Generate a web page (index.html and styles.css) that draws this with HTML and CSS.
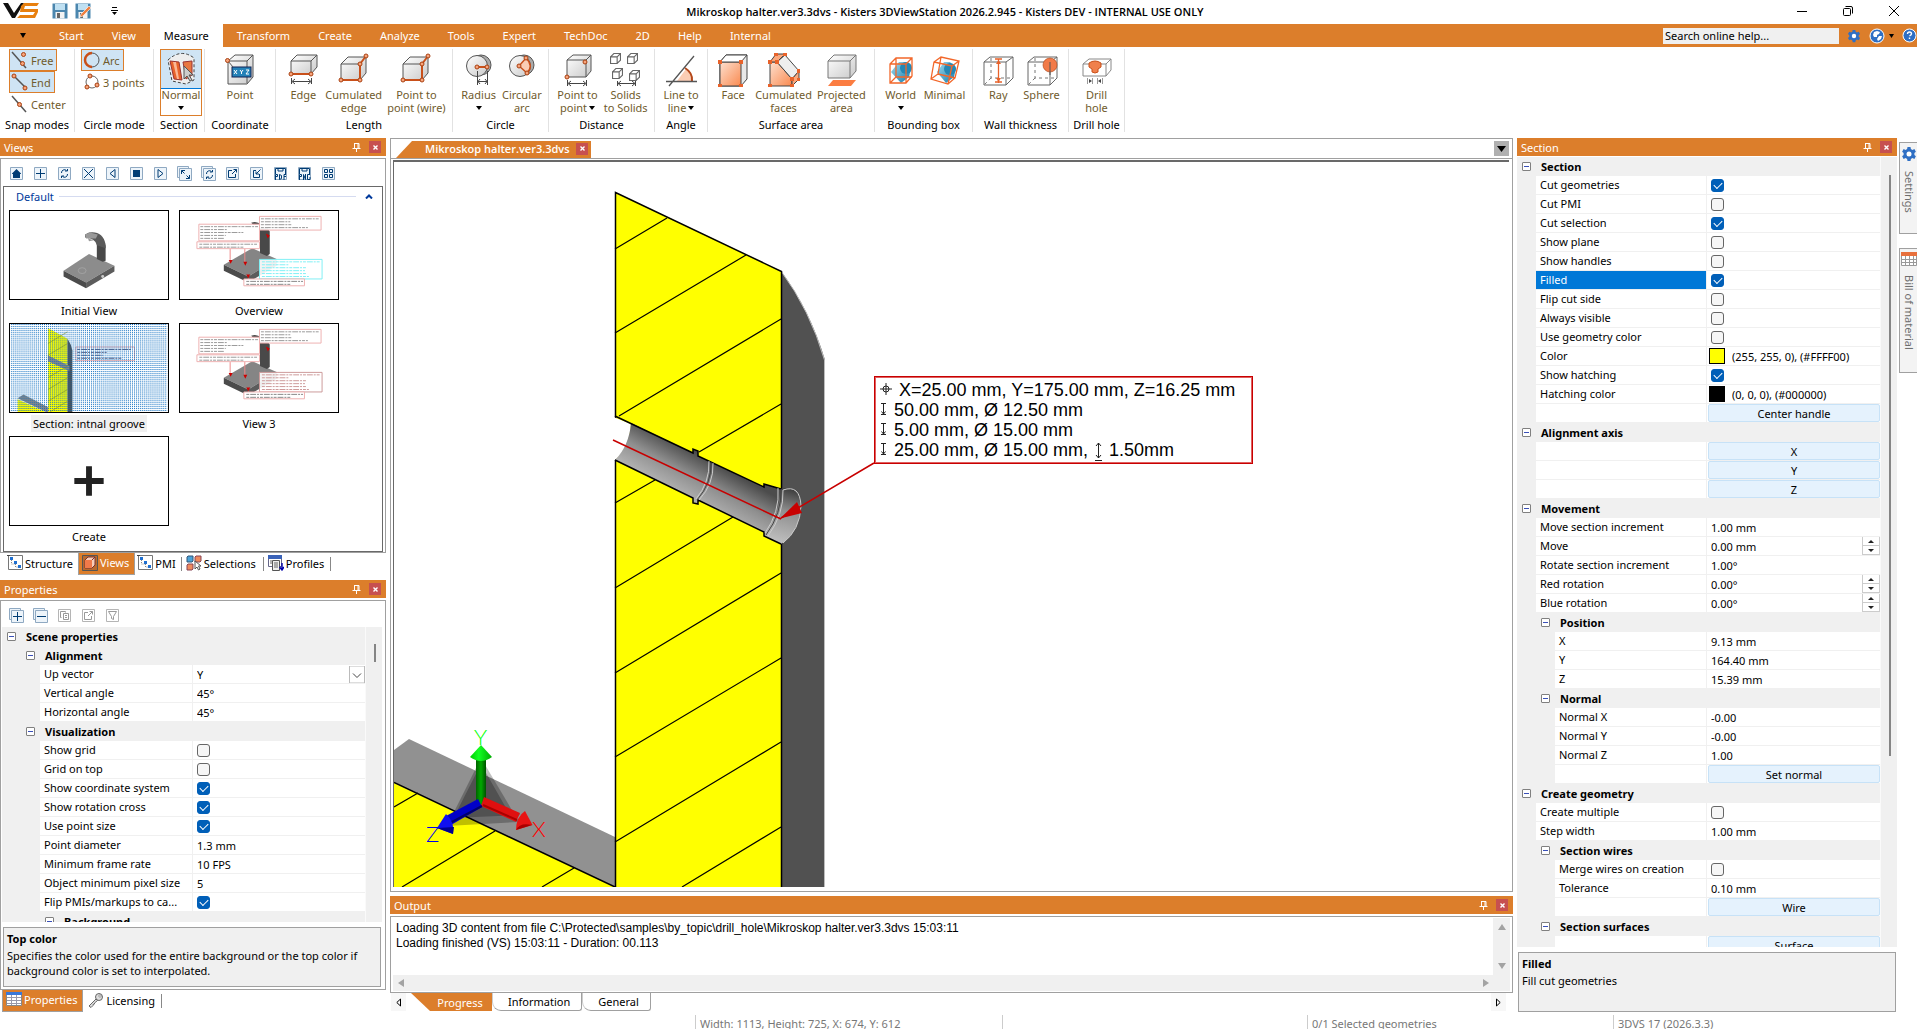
FILE: index.html
```html
<!DOCTYPE html>
<html lang="en">
<head>
<meta charset="utf-8">
<title>Mikroskop halter.ver3.3dvs - Kisters 3DViewStation</title>
<link rel="stylesheet" href="styles.css">
</head>
<body>

<!-- Shared drawings -->
<svg class="defs" width="0" height="0" aria-hidden="true">
  <defs>
    <linearGradient id="face" x1="0" y1="0" x2="1" y2="1"><stop offset="0" stop-color="#fff"/><stop offset="1" stop-color="#c9c9c9"/></linearGradient>
    <linearGradient id="orangeFace" x1="0" y1="0" x2="1" y2="1"><stop offset="0" stop-color="#fde0cf"/><stop offset="1" stop-color="#fa8a50"/></linearGradient>
    <linearGradient id="blueFace" x1="0" y1="0" x2="1" y2="1"><stop offset="0" stop-color="#9fdcf0"/><stop offset="1" stop-color="#1479a8"/></linearGradient>
    <pattern id="dots" width="2" height="2" patternUnits="userSpaceOnUse"><rect width="1" height="1" fill="#0a6cc0"/></pattern>
    <symbol id="pin" viewBox="0 0 9 9"><path d="M2 .5h5M2.500 .5v5M6 .5v5M7 .5v5M.5 5.500h8M4.500 6v3" fill="none" stroke="#fff"/></symbol>
    <symbol id="cross" viewBox="0 0 5 5"><path d="M.5.5l4 4M4.500.5l-4 4" stroke="#fff" stroke-width="1.400"/></symbol>
    <symbol id="gear" viewBox="0 0 16 16"><path fill="#2f6fc4" d="M6.500 1h3l.4 2 1.500.9 2-.8 1.500 2.600-1.500 1.400v1.800l1.500 1.400-1.500 2.600-2-.8-1.500.9-.4 2h-3l-.4-2-1.500-.9-2 .8-1.500-2.600 1.500-1.400V7.100L1.100 5.700l1.500-2.600 2 .8 1.500-.9z"/><circle cx="8" cy="8" r="2.500" fill="#fff"/></symbol>
    <symbol id="save" viewBox="0 0 16 16"><path fill="#4b86ae" d="M.5.5h15v15H.5z"/><path fill="#bfe0f2" d="M3 1h10v6H3z"/><path fill="#f3f3f3" d="M3.500 9h9v6.500h-9z"/><path fill="#666" d="M5 10h3v5H5z"/></symbol>
    <symbol id="tree" viewBox="0 0 16 16"><path fill="#fff" stroke="#777" d="M1.500.5h14v14h-14z"/><path fill="none" stroke="#888" stroke-dasharray="1 1" d="M4.500 3v6h4v3h4"/><path fill="#1e6fd0" d="M3 2h3v3H3zM7 6h3v3H7zM11 10h3v3h-3z"/><path d="M0 .5h3" stroke="#444"/></symbol>
    <symbol id="minicube" viewBox="0 0 10 10"><path fill="#fff" stroke="#666" d="M.5 3.500h6v6h-6zM.5 3.500l3-3h6v6l-3 3M6.500 3.500l3-3"/></symbol>
    <symbol id="stand" viewBox="0 0 160 90">
      <path fill="#8c8c8c" d="M54 61L80 44l26 12-29 17z"/><path fill="#4b4b4b" d="M54 61l23 12v6L54 67z"/><path fill="#5c5c5c" d="M77 73l29-17v6L77 79z"/>
      <ellipse cx="73" cy="61" rx="4" ry="3" fill="none" stroke="#aaa" stroke-width=".7"/><circle cx="94" cy="67" r="1.500" fill="#ccc"/>
      <path fill="#484848" d="M88 34l9 1v16l-3 1-6-3z"/><path fill="#5a5a5a" d="M76 24l4-2q14-2 17 12v4l-9-3q-1-7-12-8z"/><path fill="#999" d="M76 24l5-2 8 2-2 4-10 0zM79 28l6 2-5 1z"/>
    </symbol>
    <symbol id="measured" viewBox="0 0 160 90">
      <path fill="#858585" d="M44 55l29-17 25 11-29 18z"/><path fill="#4b4b4b" d="M44 55l25 12v6L44 61z"/><path fill="#5c5c5c" d="M69 67l29-18v7L69 73z"/>
      <path fill="#494949" d="M81 18l8 0 2 3v23l-3 2-7-3zM72 12q6-2 10 2h-8z"/>
      <g fill="#fff" fill-opacity=".9" stroke="#eeb0b0"><path d="M80.500 5.500h63v14h-63z"/><path d="M18.500 13.500h62v17h-62z"/><path d="M16.500 31.500h64v7h-64z"/></g>
      <g stroke="#999" stroke-dasharray="3 1 6 1 2 1"><path d="M82 8h60M82 11h30M82 14h32M82 17h48M20 16h59M20 19h28M20 22h44M20 25h26M20 28h25M19 34h60M19 37h46"/></g>
      <path d="M50.500 39v11M65.500 39v14" stroke="#e88"/><path fill="#c00" d="M49 50h4l-2 4zM64 52h4l-2 4zM87 23l4 2-2 3zM67 65h4l-2 4z"/>
    </symbol>
    <symbol id="measuredLow" viewBox="0 0 160 90">
      <path d="M80.500 49.500h64v20h-64z" fill="#fff" fill-opacity=".9" stroke="currentColor"/><path d="M83 52h60M83 55h28M83 58h46M83 61h44M83 64h46M83 67h48" stroke="currentColor" stroke-dasharray="3 1 6 1 2 1"/>
      <path d="M64.500 69.500h62v7h-62z" fill="#fff" stroke="#eeb0b0"/><path d="M67 72h58M67 75h46" stroke="#888" stroke-dasharray="3 1 6 1 2 1"/>
    </symbol>
    <symbol id="depth" viewBox="0 0 7 14"><path d="M1 1.500h5M3.500 2v10M1.500 9.500l2 2.500 2-2.500M1 12.500h5" fill="none" stroke="#222"/></symbol>
  </defs>
</svg>

<header class="titlebar">
  <div class="quick">
    <svg width="40" height="18" viewBox="0 0 40 18"><path fill="#111" d="M0 1h5l6 10L18 1h3L12 16H9z"/><path fill="#e8800f" d="M21 1h15l-2 3H22l-1 3h14v3l-3 6H14l3-3h13l2-3H17l1-6z"/></svg>
    <button aria-label="Save"><svg width="16" height="16"><use href="#save"/></svg></button>
    <button aria-label="Save as"><svg width="17" height="16"><use href="#save" width="16"/><path d="M5 14l1-3 8-8 2 2-8 8z" fill="#f08040" stroke="#fff" stroke-width=".6"/></svg></button>
    <button aria-label="Customize"><svg width="7" height="8"><path d="M1 .5h5M0 3.500h7"  stroke="#000"/><path d="M1 5h5l-2.500 3z"/></svg></button>
  </div>
  <h1>Mikroskop halter.ver3.3dvs - Kisters 3DViewStation 2026.2.945 - Kisters DEV - INTERNAL USE ONLY</h1>
  <div class="winctl">
    <button aria-label="Minimize"><svg width="10" height="10"><path d="M0 5.500h10" stroke="#000"/></svg></button>
    <button aria-label="Restore"><svg width="10" height="10" fill="none" stroke="#000"><rect x=".5" y="2.500" width="7" height="7" rx="1"/><path d="M2.500.5H8q1.500 0 1.500 1.500v5.500"/></svg></button>
    <button aria-label="Close"><svg width="10" height="10"><path d="M0 0l10 10M10 0L0 10" stroke="#000"/></svg></button>
  </div>
</header>

<nav class="menu">
  <button class="file" aria-label="File"><svg width="6" height="5"><path d="M0 0h6L3 5z"/></svg></button>
  <a href="#">Start</a><a href="#">View</a><a href="#" class="on">Measure</a><a href="#">Transform</a><a href="#">Create</a><a href="#">Analyze</a><a href="#">Tools</a><a href="#">Expert</a><a href="#">TechDoc</a><a href="#">2D</a><a href="#">Help</a><a href="#">Internal</a>
  <div class="help">
    <input type="text" value="Search online help..." aria-label="Search online help">
    <button aria-label="Settings"><svg width="14" height="14"><use href="#gear"/></svg></button>
    <button aria-label="Online"><svg width="16" height="16" viewBox="0 0 16 16"><circle cx="8" cy="8" r="7" fill="#2f6fc4" stroke="#fff"/><path fill="#fff" d="M8 3l3 1-1 2-2 1 0 2-3 0-1-2 1-3zM10 8l3 0-1 3-3 2-1-2z"/></svg><svg width="5" height="4"><path d="M0 0h5L2.500 4z"/></svg></button>
    <button aria-label="Help"><svg width="15" height="15"><circle cx="7.500" cy="7.500" r="6.500" fill="#2f6fc4" stroke="#fff"/><path d="M5.500 6q0-2 2-2t2 1.800q0 1-2 2.200M7.500 9.500v1.500" fill="none" stroke="#fff" stroke-width="1.400"/></svg></button>
  </div>
</nav>

<section class="ribbon">
  <div class="group g-snap">
    <div class="stack">
      <button class="small on"><svg width="18" height="18"><path d="M1 1l14 16" stroke="#555" stroke-width="1.500"/><g fill="#f7a47c" stroke="#a84010"><circle cx="12.500" cy="3.500" r="2"/><circle cx="11.500" cy="12.500" r="2"/></g></svg>Free</button>
      <button class="small on"><svg width="18" height="18"><path d="M3 3l12 12" stroke="#555" stroke-width="1.500"/><g fill="#f7a47c" stroke="#a84010"><circle cx="3" cy="3" r="2"/><circle cx="14" cy="15" r="2"/></g></svg>End</button>
      <button class="small"><svg width="18" height="18"><path d="M1 1l14 16" stroke="#555" stroke-width="1.500"/><circle cx="8.500" cy="9.500" r="2" fill="#f7a47c" stroke="#a84010"/></svg>Center</button>
    </div><h2>Snap modes</h2>
  </div>
  <div class="group g-circlemode">
    <div class="stack">
      <button class="small on"><svg width="18" height="18"><circle cx="9" cy="9" r="7" fill="none" stroke="#555"/><path d="M9 2a7 7 0 0 0 0 14" fill="none" stroke="#c9501a" stroke-width="2.500"/></svg>Arc</button>
      <button class="small"><svg width="18" height="18"><circle cx="9" cy="9" r="6" fill="none" stroke="#666"/><g fill="#f7a47c" stroke="#a84010"><circle cx="7" cy="3" r="2"/><circle cx="14" cy="12" r="2"/><circle cx="4" cy="14" r="2"/></g></svg>3 points</button>
    </div><h2>Circle mode</h2>
  </div>
  <div class="group g-section">
    <div class="tools">
      <button class="tool normal"><svg width="34" height="34"><path d="M4 8q13-12 26-2v22l-8 4-14-3z" fill="#eee" stroke="#444" stroke-dasharray="3 2"/><path d="M6 9l9 1 3 18-8-1z" fill="#e8622a" stroke="#933"/><path d="M9 10l3 0 3 17-2 0z" fill="#fbb896"/><path d="M19 10l9-1v14l-6 4z" fill="#e8763f" stroke="#933"/><path d="M20 14v13l3-3 3 5 2-1-3-5h4z" fill="#ccc" stroke="#555"/></svg><span>Normal</span><i class="drop"></i></button>
    </div><h2>Section</h2>
  </div>
  <div class="group g-coord">
    <div class="tools">
      <button class="tool"><svg width="34" height="34"><path d="M5 9l7-6h18v22l-6 7H5z" fill="url(#face)" stroke="#555"/><path d="M5 9h19v22M24 9l6-6" fill="none" stroke="#555"/><rect x="9" y="15" width="19" height="10" fill="#2482b8" stroke="#125"/><path d="M11 18l3 4M14 18l-3 4M17 18l1.500 2 1.500-2M18.500 20v2M23 18h3l-3 4h3" fill="none" stroke="#fff"/><path d="M5 9l5 6" stroke="#555"/><circle cx="4.500" cy="8.500" r="2" fill="#f7a47c" stroke="#a84010"/></svg><span>Point</span></button>
    </div><h2>Coordinate</h2>
  </div>
  <div class="group g-length">
    <div class="tools">
      <button class="tool"><svg width="34" height="34"><path d="M5 9l6-6h20l0 12-6 7H5z" fill="url(#face)" stroke="#555"/><path d="M5 9h20v13M25 9l6-6" fill="none" stroke="#555"/><path d="M5 22h20" stroke="#c9501a" stroke-width="2"/><g fill="#f7a47c" stroke="#a84010"><circle cx="5" cy="22" r="2"/><circle cx="25" cy="22" r="2"/></g><path d="M5.500 26v6M25.500 26v6M7 29.500h17M9 27l-3 2.500L9 32M22 27l3 2.500-3 2.500" fill="none" stroke="#444"/></svg><span>Edge</span></button>
      <button class="tool"><svg width="34" height="34"><path d="M4 12l7-7h18v16l-6 7H4z" fill="url(#face)" stroke="#555"/><path d="M4 12h19v16" fill="none" stroke="#555"/><path d="M4 28h19V12l6-8" fill="none" stroke="#c9501a" stroke-width="2"/><g fill="#f7a47c" stroke="#a84010"><circle cx="4" cy="28" r="2"/><circle cx="23" cy="28" r="2"/><circle cx="23" cy="12" r="2"/><circle cx="29" cy="4" r="2"/></g></svg><span>Cumulated<br>edge</span></button>
      <button class="tool"><svg width="34" height="34"><path d="M4 12l7-7h18v16l-6 7H4z" fill="url(#face)" stroke="#555"/><path d="M4 12h19v16" fill="none" stroke="#555"/><path d="M4 28h19V12l6-8" fill="none" stroke="#c9501a" stroke-width="2"/><g fill="#f7a47c" stroke="#a84010"><circle cx="4" cy="28" r="2"/><circle cx="23" cy="28" r="2"/><circle cx="23" cy="12" r="2"/><circle cx="29" cy="4" r="2"/></g></svg><span>Point to<br>point (wire)</span></button>
    </div><h2>Length</h2>
  </div>
  <div class="group g-circle">
    <div class="tools">
      <button class="tool"><svg width="34" height="34"><circle cx="19" cy="13" r="10" fill="#aaa" stroke="#555"/><circle cx="15" cy="14" r="10.500" fill="url(#face)" stroke="#555"/><path d="M15 15h10" stroke="#c9501a" stroke-width="2"/><g fill="#f7a47c" stroke="#a84010"><circle cx="15" cy="15" r="2"/><circle cx="25" cy="15" r="2"/></g><path d="M15.500 19v14M25.500 19v14M16 29.500h9M18 27l-2 2.500 2 2.500M23 27l2 2.500-2 2.500" fill="none" stroke="#444"/></svg><span>Radius</span><i class="drop"></i></button>
      <button class="tool"><svg width="34" height="34"><circle cx="19" cy="13" r="10" fill="#aaa" stroke="#555"/><circle cx="15" cy="14" r="10.500" fill="url(#face)" stroke="#555"/><path d="M14 14l7-8q8 8 1 15z" fill="#fbcdb4" stroke="#c9501a" stroke-width="1.500"/><g fill="#f7a47c" stroke="#a84010"><circle cx="14" cy="14" r="2"/><circle cx="21" cy="6" r="2"/><circle cx="22" cy="21" r="2"/></g></svg><span>Circular<br>arc</span></button>
    </div><h2>Circle</h2>
  </div>
  <div class="group g-distance">
    <div class="tools">
      <button class="tool"><svg width="34" height="34"><path d="M6 8l6-5h18v16l-5 6H6z" fill="url(#face)" stroke="#555"/><path d="M6 8h19v17M25 8l5-5" fill="none" stroke="#555"/><g fill="#f7a47c" stroke="#a84010"><circle cx="24" cy="10" r="2"/><circle cx="6" cy="25" r="2"/></g><path d="M6.500 28v6M25.500 28v6M8 31.500h16M10 29l-3 2.500 3 2.500M22 29l3 2.500-3 2.500" fill="none" stroke="#444"/></svg><span>Point to<br>point<i class="drop in"></i></span></button>
      <button class="tool"><svg width="34" height="34"><use href="#minicube" x="1" y="1" width="11" height="11"/><use href="#minicube" x="18" y="1" width="11" height="11"/><use href="#minicube" x="3" y="16" width="11" height="11"/><use href="#minicube" x="20" y="18" width="11" height="11"/><path d="M8.500 29v5M26.500 29v5M9 31.500h17M12 29l-3 2.500 3 2.500M23 29l3 2.500-3 2.500" fill="none" stroke="#444"/></svg><span>Solids<br>to Solids</span></button>
    </div><h2>Distance</h2>
  </div>
  <div class="group g-angle">
    <div class="tools">
      <button class="tool"><svg width="34" height="34"><path d="M13 29l9-12q7 5 6 12z" fill="#fbcdb4"/><path d="M21 16q8 5 7 13" fill="none" stroke="#b5481a" stroke-width="2"/><path d="M2 29.500h31M5 34L30 4" stroke="#555" stroke-width="1.300"/></svg><span>Line to<br>line<i class="drop in"></i></span></button>
    </div><h2>Angle</h2>
  </div>
  <div class="group g-surface">
    <div class="tools">
      <button class="tool"><svg width="34" height="36"><path d="M4 10l6-7h21v24l-6 7H4z" fill="#e8e8e8" stroke="#444"/><path d="M4 10h21v24H4z" fill="url(#orangeFace)" stroke="#444"/><path d="M4 10l6-7h21l-6 7z" fill="#fff" stroke="#444"/><g fill="#e8622a"><path d="M2 8h4v4H2zM23 8h4v4h-4zM2 32h4v3H2zM23 32h4v3h-4z"/></g></svg><span>Face</span></button>
      <button class="tool"><svg width="34" height="36"><path d="M3 10h7l15 17v7H3z" fill="url(#orangeFace)" stroke="#444"/><path d="M10 10l8-7 14 16-7 8z" fill="#eee" stroke="#444"/><path d="M3 10l6-8 9 0-8 8zM25 27l7-8v8l-7 7z" fill="#fba77c" stroke="#444"/><g fill="#e8622a"><path d="M1 8h4v4H1zM8 8h4v4H8zM7 1h4v3H7zM16 1h4v3h-4zM30 17h3v4h-3zM30 26h3v3h-3zM23 25h4v4h-4zM1 32h4v3H1zM23 32h4v3h-4z"/></g></svg><span>Cumulated<br>faces</span></button>
      <button class="tool"><svg width="34" height="36"><path d="M4 9l6-6h22v16l-6 7H4z" fill="url(#face)" stroke="#777"/><path d="M4 9h22v17M26 9l6-6" fill="none" stroke="#777"/><path d="M9 28h23l-5 6H4z" fill="#fb7d42"/></svg><span>Projected<br>area</span></button>
    </div><h2>Surface area</h2>
  </div>
  <div class="group g-box">
    <div class="tools">
      <button class="tool"><svg width="34" height="34"><path d="M7 20l8-10 6 0 6 6-2 9-8 6z" fill="url(#blueFace)"/><circle cx="22" cy="16" r="6" fill="#2487b4"/><path d="M6 12l6-6h16v18l-6 7H6zM6 12h16v19M22 12l6-6M12 6v19l-6 6M12 25h16" fill="none" stroke="#f2672a" stroke-width="1.300"/></svg><span>World</span><i class="drop"></i></button>
      <button class="tool"><svg width="34" height="34"><path d="M9 20l7-10 6 0 6 6-2 9-8 6z" fill="url(#blueFace)"/><circle cx="22" cy="17" r="6" fill="#2487b4"/><path d="M6 10l7-5 18 4-4 17-7 6-17-5zM6 10l18 4 7-5M24 14l-4 18M13 5L10 22l-7 5M10 22l17 4" fill="none" stroke="#f2672a" stroke-width="1.300"/></svg><span>Minimal</span></button>
    </div><h2>Bounding box</h2>
  </div>
  <div class="group g-wall">
    <div class="tools">
      <button class="tool"><svg width="34" height="34"><path d="M3 10l6-5h23v21l-7 7H3zM3 10h22v23M25 10l7-5" fill="#fff" stroke="#666"/><path d="M10 6v20h20M10 26l-6 6" fill="none" stroke="#777" stroke-dasharray="3 3"/><path d="M17.500 7v24M14 7h7M14 30h7" stroke="#e8622a" stroke-width="1.300"/><path d="M15 12l2.500-4 2.500 4zM15 26l2.500 4 2.500-4z" fill="#e8622a"/></svg><span>Ray</span></button>
      <button class="tool"><svg width="34" height="34"><path d="M3 10l6-5h23v21l-7 7H3zM3 10h22v23M25 10l7-5" fill="#fff" stroke="#666"/><path d="M10 6v20h20M10 26l-6 6" fill="none" stroke="#777" stroke-dasharray="3 3"/><circle cx="25" cy="13" r="7" fill="#f27a48" stroke="#a84010" stroke-width=".6"/><path d="M25 10v13" stroke="#555"/></svg><span>Sphere</span></button>
    </div><h2>Wall thickness</h2>
  </div>
  <div class="group g-drill">
    <div class="tools">
      <button class="tool"><svg width="34" height="34"><path d="M3 12l6-5h22v11l-5 6H3zM3 12h23v12M26 12l5-5" fill="#fff" stroke="#888"/><path d="M9 11q6-4 12 0v4l-3 2v3q-3 2-6 0v-3l-3-2z" fill="#f0804c" stroke="#c9501a"/><path d="M7.500 26v6M12.500 26v6M17.500 26v6M22.500 26v6" stroke="#999"/><path d="M9 27l3 2-3 2zM21 27l-3 2 3 2z" fill="#444"/></svg><span>Drill<br>hole</span></button>
    </div><h2>Drill hole</h2>
  </div>
</section>

<main class="work">
  <aside class="left">
    <section class="dock">
      <header class="cap"><h2>Views</h2><button aria-label="Pin"><svg width="9" height="9"><use href="#pin"/></svg></button><button class="x" aria-label="Close"><svg width="5" height="5"><use href="#cross"/></svg></button></header>
      <div class="pane">
        <div class="bar blue">
          <button aria-label="Home"><svg width="15" height="15"><path class="f" d="M1.500 1.500h12v12h-12z"/><path class="d" d="M7.500 3L3 7.500V8h1v4h7V8h1v-.5z"/></svg></button>
          <button aria-label="Add"><svg width="15" height="15"><path class="f" d="M1.500 1.500h12v12h-12z"/><path class="s" d="M7.500 3v9M3 7.500h9"/></svg></button>
          <button aria-label="Update"><svg width="15" height="15"><path class="f" d="M1.500 1.500h12v12h-12z"/><path class="s" d="M4.500 7a3 3 0 0 1 5-2.500M10.500 8a3 3 0 0 1-5 2.500M8 5h2.500V3M7 10H4.500v2"/></svg></button>
          <button aria-label="Delete"><svg width="15" height="15"><path class="f" d="M1.500 1.500h12v12h-12z"/><path class="s" d="M3 3l9 9M12 3l-9 9"/></svg></button>
          <button aria-label="Previous"><svg width="15" height="15"><path class="f" d="M1.500 1.500h12v12h-12z"/><path class="s" d="M10 3.500v8l-5-4z"/></svg></button>
          <button aria-label="Stop"><svg width="15" height="15"><path class="f" d="M1.500 1.500h12v12h-12z"/><path class="d" d="M4 4h7v7H4z"/></svg></button>
          <button aria-label="Next"><svg width="15" height="15"><path class="f" d="M1.500 1.500h12v12h-12z"/><path class="s" d="M5 3.500v8l5-4z"/></svg></button>
          <button aria-label="Expand all"><svg width="15" height="15"><path class="f" d="M.5.5h11v11H.5z"/><path class="f" d="M2.500 2.500h12v12h-12z"/><path class="s" d="M4.500 8V4.500H8M4.500 4.500l3 3M12.500 9v3.500H9M12.500 12.500l-3-3"/></svg></button>
          <button aria-label="Update all"><svg width="15" height="15"><path class="f" d="M.5.5h11v11H.5z"/><path class="f" d="M2.500 2.500h12v12h-12z"/><path class="s" d="M5.500 8a3 3 0 0 1 5-2.500M11.500 9a3 3 0 0 1-5 2.500M9 6h2.500V4M8 11H5.500v2"/></svg></button>
          <button aria-label="Export"><svg width="15" height="15"><path class="f" d="M1.500 1.500h12v12h-12z"/><path class="s" d="M7 4.500H3.500v7h7V8M7 8l4.500-4.500M8.500 3.500h3v3"/></svg></button>
          <button aria-label="Import"><svg width="15" height="15"><path class="f" d="M1.500 1.500h12v12h-12z"/><path class="s" d="M7 4.500H4.500v7h6V8M11.500 3.500L7 8M7 5.500V8h3"/></svg></button>
          <button aria-label="Save PDF"><svg width="15" height="15"><path class="f" d="M1.500 1.500h12v12h-12z"/><path class="s" d="M2.500 8V2.500h10V8M5 2.500V5h5V2.500M2.500 14V8.500h2v2h-2M6.500 8.500v5l2-1v-3zM13 8.500h-2V14M11 10.500h2"/></svg></button>
          <button aria-label="Save PNG"><svg width="15" height="15"><path class="f" d="M1.500 1.500h12v12h-12z"/><path class="s" d="M2.500 8V2.500h10V8M5 2.500V5h5V2.500M2.500 14V8.500h2v2h-2M6.500 14V8.500l2 5V8M13 8.500h-2.500v5H13V11"/></svg></button>
          <button aria-label="Tiles"><svg width="15" height="15"><path class="f" d="M1.500 1.500h12v12h-12z"/><path class="s" d="M3.500 3.500h3v3h-3zM8.500 3.500h3v3h-3zM3.500 8.500h3v3h-3zM8.500 8.500h3v3h-3z"/></svg></button>
        </div>
        <div class="gallery">
          <div class="ghead"><span>Default</span><hr><svg width="8" height="5"><path d="M1 4.500L4 1.500l3 3" fill="none" stroke="#00399b" stroke-width="2"/></svg></div>
          <div class="thumbs">
            <figure><svg viewBox="0 0 160 90"><use href="#stand"/></svg><figcaption>Initial View</figcaption></figure>
            <figure><svg viewBox="0 0 160 90"><use href="#measured"/><g color="#7ff0f5"><use href="#measuredLow"/></g></svg><figcaption>Overview</figcaption></figure>
            <figure class="sel"><svg viewBox="0 0 160 90"><path fill="#fff" d="M0 0h160v90H0z"/><path fill="#ff0" d="M38 4l20 11v75H38zM7 77l31 14H7z"/><path fill="#505050" d="M58 15q4 6 5 12v63h-5z"/><path fill="#888" d="M38 32l22 11v5L38 38zM7 76l6-4 25 13v6z"/><path d="M38 20l20-12M38 32l20-12M38 55l20-12M38 67l20-12M38 79l20-12M40 90l18-11" stroke="#990" stroke-width=".6"/><path d="M66.500 23.500h60v14h-60z" fill="none" stroke="#eaa"/><path d="M68 26h56M68 29h30M68 32h26M68 35h46" stroke="#557" stroke-dasharray="3 1 6 1 2 1"/><path fill="url(#dots)" d="M0 0h160v90H0z"/></svg><figcaption>Section: intnal groove</figcaption></figure>
            <figure><svg viewBox="0 0 160 90"><use href="#measured"/><g color="#c99"><use href="#measuredLow"/></g></svg><figcaption>View 3</figcaption></figure>
            <figure><svg viewBox="0 0 160 90"><path d="M80 30v30M65 45h30" stroke="#222" stroke-width="6"/></svg><figcaption>Create</figcaption></figure>
          </div>
        </div>
      </div>
      <nav class="ptabs">
        <button><svg width="16" height="16"><use href="#tree"/></svg>Structure</button>
        <button class="on"><svg width="16" height="16"><path d="M.5.5h15v15H.5z" fill="#b8692e" stroke="#555"/><path d="M3 5l3-3h7v8l-3 3H3z" fill="#f8cdb8" stroke="#733"/><path d="M3 5h7v8H3z" fill="#f07a4a"/><path d="M10 5l3-3" stroke="#733"/></svg>Views</button>
        <button><svg width="16" height="16"><use href="#tree"/></svg>PMI</button>
        <button class="bl"><svg width="16" height="16"><path d="M1 2l1-1h5v5l-1 1H1z" fill="#4aa3d8" stroke="#357"/><path d="M9 2l1-1h5v5l-1 1H9zM1 10l1-1h5v5l-1 1H1z" fill="#f08a5c" stroke="#845"/><path d="M9 6v8l2-2 1.500 3 1.500-1-1.500-3H15z" fill="#fff" stroke="#555"/></svg>Selections</button>
        <button class="bl br"><svg width="16" height="16"><path d="M.5.5h13v11H.5z" fill="#fff" stroke="#668"/><path d="M0 0h14v4H0z" fill="#3a62b8"/><path d="M4.500 5.500h7v10h-7z" fill="#eee" stroke="#555"/><path d="M6 8h4M6 10h4M6 12h4M2 6h2M2 8h2" stroke="#666"/><path d="M14 8v6M11.500 12l2.500 3 2-3" fill="none" stroke="#00a" stroke-width="1.400"/></svg>Profiles</button>
      </nav>
    </section>

    <section class="dock grow">
      <header class="cap"><h2>Properties</h2><button aria-label="Pin"><svg width="9" height="9"><use href="#pin"/></svg></button><button class="x" aria-label="Close"><svg width="5" height="5"><use href="#cross"/></svg></button></header>
      <div class="pane props">
        <div class="bar">
          <button class="blue" aria-label="Expand all"><svg width="15" height="15"><path class="f" d="M.5.5h11v11H.5z"/><path class="f" d="M2.500 2.500h12v12h-12z"/><path class="s" d="M8.500 4v9M4 8.500h9"/></svg></button>
          <button class="blue" aria-label="Collapse all"><svg width="15" height="15"><path class="f" d="M.5.5h11v11H.5z"/><path class="f" d="M2.500 2.500h12v12h-12z"/><path class="s" d="M4 8.500h9"/></svg></button>
          <button class="gray" aria-label="Copy"><svg width="15" height="15"><path class="f" d="M1.500 1.500h12v12h-12z"/><path class="s" d="M4.500 9.500h-1v-6h5v1M6.500 5.500h5v6h-5zM8 7.500h2M8 9.500h2"/></svg></button>
          <button class="gray" aria-label="Export"><svg width="15" height="15"><path class="f" d="M1.500 1.500h12v12h-12z"/><path class="s" d="M7 4.500H3.500v7h7V8M7 8l4.500-4.500M8.500 3.500h3v3"/></svg></button>
          <button class="gray" aria-label="Filter"><svg width="15" height="15"><path class="f" d="M1.500 1.500h12v12h-12z"/><path class="s" d="M3.500 3.500h8l-3 5v3l-2-1v-2z"/></svg></button>
        </div>
        <div class="sheet lsheet">
          <div class="rows">
            <h3 class="cat c0"><button aria-label="Collapse"></button>Scene properties</h3>
            <h3 class="cat c1"><button aria-label="Collapse"></button>Alignment</h3>
            <label class="row r1"><span>Up vector</span><span class="val"><select><option>Y</option></select></span></label>
            <label class="row r1"><span>Vertical angle</span><span class="val"><input type="text" value="45°"></span></label>
            <label class="row r1"><span>Horizontal angle</span><span class="val"><input type="text" value="45°"></span></label>
            <h3 class="cat c1"><button aria-label="Collapse"></button>Visualization</h3>
            <label class="row r1"><span>Show grid</span><span class="val"><input type="checkbox"></span></label>
            <label class="row r1"><span>Grid on top</span><span class="val"><input type="checkbox"></span></label>
            <label class="row r1"><span>Show coordinate system</span><span class="val"><input type="checkbox" checked></span></label>
            <label class="row r1"><span>Show rotation cross</span><span class="val"><input type="checkbox" checked></span></label>
            <label class="row r1"><span>Use point size</span><span class="val"><input type="checkbox" checked></span></label>
            <label class="row r1"><span>Point diameter</span><span class="val"><input type="text" value="1.3 mm"></span></label>
            <label class="row r1"><span>Minimum frame rate</span><span class="val"><input type="text" value="10 FPS"></span></label>
            <label class="row r1"><span>Object minimum pixel size</span><span class="val"><input type="text" value="5"></span></label>
            <label class="row r1"><span>Flip PMIs/markups to ca...</span><span class="val"><input type="checkbox" checked></span></label>
            <h3 class="cat c2"><button aria-label="Collapse"></button>Background</h3>
          </div>
          <div class="scroll"><i></i></div>
        </div>
        <div class="desc"><b>Top color</b><p>Specifies the color used for the entire background or the top color if background color is set to interpolated.</p></div>
      </div>
      <nav class="ptabs low">
        <button class="on"><svg width="16" height="16"><path d="M.5.5h15v13H.5z" fill="#fff" stroke="#888"/><path d="M0 0h16v3H0z" fill="#3a78d8"/><path d="M1 5.500h14M1 8.500h14M1 11.500h14M5.500 3v10M10.500 3v10" stroke="#99a"/></svg>Properties</button>
        <button class="br"><svg width="16" height="16"><circle cx="11" cy="5" r="3.500" fill="#ddd" stroke="#666"/><circle cx="12" cy="4" r="1.200" fill="#fff" stroke="#666" stroke-width=".6"/><path d="M8 7l-7 7 2 1.500 2-2v-1l1.500-.5V11l3-2.500z" fill="#ddd" stroke="#666"/></svg>Licensing</button>
      </nav>
    </section>
  </aside>

  <section class="center">
    <div class="doc">
      <div class="dtabs">
        <div class="dtab"><b>Mikroskop halter.ver3.3dvs</b><button class="x" aria-label="Close"><svg width="5" height="5"><use href="#cross"/></svg></button></div>
        <button class="dmenu" aria-label="Documents"><svg width="9" height="6"><path d="M0 0h9L4.500 6z"/></svg></button>
      </div>
      <div class="view">
        <svg class="scene" width="100%" height="100%">
          <defs>
            <linearGradient id="bore" gradientUnits="userSpaceOnUse" x1="700" y1="455" x2="678" y2="495"><stop offset="0" stop-color="#4c4c4c"/><stop offset=".5" stop-color="#8f8f8f"/><stop offset="1" stop-color="#b4b4b4"/></linearGradient>
            <linearGradient id="mouth" gradientUnits="userSpaceOnUse" x1="790" y1="486" x2="775" y2="540"><stop offset="0" stop-color="#333"/><stop offset=".45" stop-color="#8f8f8f"/><stop offset="1" stop-color="#bdbdbd"/></linearGradient>
            <linearGradient id="gshaft"><stop offset="0" stop-color="#006400"/><stop offset=".5" stop-color="#0a0"/><stop offset="1" stop-color="#005000"/></linearGradient>
            <linearGradient id="gcone"><stop offset="0" stop-color="#0c0"/><stop offset=".4" stop-color="#1f2"/><stop offset="1" stop-color="#0a0"/></linearGradient>
          </defs>
          <g transform="translate(-394,-162)">
            <path fill="#515151" d="M781 271Q810 310 825 360V887H781z"/>
            <path d="M781 271Q810 310 824.500 360V887" fill="none" stroke="#bdbdbd"/>
            <path fill="#919191" d="M394 750L409 739 615 837V887L394 783z"/>
            <path fill="#ff0" d="M394 783L615 887H394z"/>
            <path fill="#ff0" d="M615 192L781 271V887H615z"/>
            <path d="M615.500 887V192.500L781.500 271.500V887M394 782.500L615 887" fill="none" stroke="#000" stroke-width="1.500"/>
            <path d="M615 249L667 218M615 333L746 255M619 416L781 319M699 452L781 404M615 503L655 480M615 588L733 517M615 673L781 573M615 757L781 658M615 842L781 742M682 887L781 827M394 807L418 793M402 887L495 831M542 887L574 868" stroke="#000" stroke-width="1.200"/>
            <path fill="#fff" d="M612 416.500L631 424Q629 450 615 460H612z"/>
            <path fill="url(#bore)" d="M631 423L693 453V449L698 451V456L764 487V484L781 489V544L764 536V532L698 500V504L693 502V498L615 460Q629 446 631 423z"/>
            <path fill="url(#mouth)" d="M764 536Q781 512 780 489Q797 484 800 502Q802 530 781 544z"/>
            <path d="M615 416L693 453V449L698 451V456L764 487V484L781 489M615 460L693 498V503L698 504V500L764 532V536L781 544" fill="none" stroke="#000" stroke-width="1.500"/>
            <path d="M709 461Q710 482 696 499M713 463Q714 484 699 500M778 488Q780 512 765 533M783 490Q784 514 768 536M783 490Q800 484 801 506Q800 530 783 543" fill="none" stroke="#ccc"/>
            <path d="M711 462Q712 483 697 500M781 489Q782 513 766 535" fill="none" stroke="#444"/>
            <path d="M613 440L781 519M781 518L874 463" stroke="#c80000" stroke-width="1.500"/>
            <path fill="#c80000" d="M780 518.500L797 502 802 513z"/>
            <!-- axis triad -->
            <path fill="#000" fill-opacity=".25" d="M481 758L447 826 519 822z"/><path fill="#000" fill-opacity=".25" d="M481 764L455 815 481 802zM481 764L510 815 481 802z"/><path fill="#000" fill-opacity=".25" d="M481 802L452 818 521 815z"/>
            <path d="M476 760h10v41l-5 4-5-3z" fill="url(#gshaft)"/>
            <path d="M481 745L492 757Q481 765 470 757z" fill="url(#gcone)"/>
            <path d="M484 797L520 813 516 822 481 806z" fill="#e01010"/><path d="M483 805L517 820" stroke="#a00" stroke-width="2"/><path d="M525 811L532.500 825 516 830Q516 817 525 811z" fill="#e81414"/><path d="M516 830Q520 822 532 825z" fill="#a00"/>
            <path d="M478 799L446 816 451 825 482 807z" fill="#0000c8"/><path d="M450 823L482 806" stroke="#00006e" stroke-width="2"/><path d="M446 814L437 828 453 834Q455 822 446 814z" fill="#1010f0"/><path d="M437 828L453 834 454 827z" fill="#000090"/>
            <g class="axes"><text x="474" y="745" fill="#0f0">Y</text><text x="532" y="837" fill="#f00">X</text><text x="426" y="842" fill="#00e">Z</text></g>
          </g>
        </svg>
        <div class="callout">
          <p><svg width="12" height="14"><path d="M6 1v12M0 7h12" stroke="#222"/><circle cx="6" cy="7" r="3" fill="none" stroke="#222"/></svg> X=25.00 mm, Y=175.00 mm, Z=16.25 mm</p>
          <p><svg width="7" height="14"><use href="#depth"/></svg> 50.00 mm, Ø 12.50 mm</p>
          <p><svg width="7" height="14"><use href="#depth"/></svg> 5.00 mm, Ø 15.00 mm</p>
          <p><svg width="7" height="14"><use href="#depth"/></svg> 25.00 mm, Ø 15.00 mm, <svg class="width" width="7" height="18"><path d="M3.500 0v15M1 3l2.500-3L6 3M1 12l2.500 3L6 12M0 17.500h7" fill="none" stroke="#222"/></svg> 1.50mm</p>
        </div>
      </div>
    </div>
    <section class="output">
      <header class="cap"><h2>Output</h2><button aria-label="Pin"><svg width="9" height="9"><use href="#pin"/></svg></button><button class="x" aria-label="Close"><svg width="5" height="5"><use href="#cross"/></svg></button></header>
      <div class="log">
        <div class="lines"><p>Loading 3D content from file C:\Protected\samples\by_topic\drill_hole\Mikroskop halter.ver3.3dvs 15:03:11</p><p>Loading finished (VS) 15:03:11 - Duration: 00.113</p></div>
        <div class="vs"><svg width="8" height="6"><path d="M4 0l4 6H0z" fill="#a3a3a3"/></svg><svg width="8" height="6"><path d="M0 0h8L4 6z" fill="#a3a3a3"/></svg></div>
        <div class="hs"><svg width="6" height="8"><path d="M6 0v8L0 4z" fill="#a3a3a3"/></svg><svg width="6" height="8"><path d="M0 0v8l6-4z" fill="#a3a3a3"/></svg></div>
      </div>
      <nav class="otabs">
        <button class="arrow" aria-label="Previous"><svg width="5" height="9"><path d="M4.500 1v7L.8 4.500z" fill="none" stroke="#000"/></svg></button>
        <button class="prog">Progress</button><button class="ot">Information</button><button class="ot">General</button>
        <button class="arrow end" aria-label="Next"><svg width="5" height="9"><path d="M.5 1v7l3.700-3.500z" fill="none" stroke="#000"/></svg></button>
      </nav>
    </section>
  </section>

  <aside class="right">
    <header class="cap"><h2>Section</h2><button aria-label="Pin"><svg width="9" height="9"><use href="#pin"/></svg></button><button class="x" aria-label="Close"><svg width="5" height="5"><use href="#cross"/></svg></button></header>
    <div class="sheet rsheet">
      <div class="rows">
        <h3 class="cat c0"><button aria-label="Collapse"></button>Section</h3>
        <label class="row r0"><span>Cut geometries</span><span class="val"><input type="checkbox" checked></span></label>
        <label class="row r0"><span>Cut PMI</span><span class="val"><input type="checkbox"></span></label>
        <label class="row r0"><span>Cut selection</span><span class="val"><input type="checkbox" checked></span></label>
        <label class="row r0"><span>Show plane</span><span class="val"><input type="checkbox"></span></label>
        <label class="row r0"><span>Show handles</span><span class="val"><input type="checkbox"></span></label>
        <label class="row r0 hot"><span>Filled</span><span class="val"><input type="checkbox" checked></span></label>
        <label class="row r0"><span>Flip cut side</span><span class="val"><input type="checkbox"></span></label>
        <label class="row r0"><span>Always visible</span><span class="val"><input type="checkbox"></span></label>
        <label class="row r0"><span>Use geometry color</span><span class="val"><input type="checkbox"></span></label>
        <label class="row r0"><span>Color</span><span class="val"><i class="sw yellow"></i><input type="text" value="(255, 255, 0), (#FFFF00)"></span></label>
        <label class="row r0"><span>Show hatching</span><span class="val"><input type="checkbox" checked></span></label>
        <label class="row r0"><span>Hatching color</span><span class="val"><i class="sw black"></i><input type="text" value="(0, 0, 0), (#000000)"></span></label>
        <div class="row r0"><span></span><span class="val"><button class="act">Center handle</button></span></div>
        <h3 class="cat c0"><button aria-label="Collapse"></button>Alignment axis</h3>
        <div class="row r0"><span></span><span class="val"><button class="act">X</button></span></div>
        <div class="row r0"><span></span><span class="val"><button class="act">Y</button></span></div>
        <div class="row r0"><span></span><span class="val"><button class="act">Z</button></span></div>
        <h3 class="cat c0"><button aria-label="Collapse"></button>Movement</h3>
        <label class="row r0"><span>Move section increment</span><span class="val"><input type="text" value="1.00 mm"></span></label>
        <div class="row r0"><label for="mv">Move</label><span class="val"><input id="mv" type="text" value="0.00 mm"><span class="spin"><button aria-label="Increase"></button><button aria-label="Decrease"></button></span></span></div>
        <label class="row r0"><span>Rotate section increment</span><span class="val"><input type="text" value="1.00°"></span></label>
        <div class="row r0"><label for="rr">Red rotation</label><span class="val"><input id="rr" type="text" value="0.00°"><span class="spin"><button aria-label="Increase"></button><button aria-label="Decrease"></button></span></span></div>
        <div class="row r0"><label for="br">Blue rotation</label><span class="val"><input id="br" type="text" value="0.00°"><span class="spin"><button aria-label="Increase"></button><button aria-label="Decrease"></button></span></span></div>
        <h3 class="cat c1"><button aria-label="Collapse"></button>Position</h3>
        <label class="row r1"><span>X</span><span class="val"><input type="text" value="9.13 mm"></span></label>
        <label class="row r1"><span>Y</span><span class="val"><input type="text" value="164.40 mm"></span></label>
        <label class="row r1"><span>Z</span><span class="val"><input type="text" value="15.39 mm"></span></label>
        <h3 class="cat c1"><button aria-label="Collapse"></button>Normal</h3>
        <label class="row r1"><span>Normal X</span><span class="val"><input type="text" value="-0.00"></span></label>
        <label class="row r1"><span>Normal Y</span><span class="val"><input type="text" value="-0.00"></span></label>
        <label class="row r1"><span>Normal Z</span><span class="val"><input type="text" value="1.00"></span></label>
        <div class="row r1"><span></span><span class="val"><button class="act">Set normal</button></span></div>
        <h3 class="cat c0"><button aria-label="Collapse"></button>Create geometry</h3>
        <label class="row r0"><span>Create multiple</span><span class="val"><input type="checkbox"></span></label>
        <label class="row r0"><span>Step width</span><span class="val"><input type="text" value="1.00 mm"></span></label>
        <h3 class="cat c1"><button aria-label="Collapse"></button>Section wires</h3>
        <label class="row r1"><span>Merge wires on creation</span><span class="val"><input type="checkbox"></span></label>
        <label class="row r1"><span>Tolerance</span><span class="val"><input type="text" value="0.10 mm"></span></label>
        <div class="row r1"><span></span><span class="val"><button class="act">Wire</button></span></div>
        <h3 class="cat c1"><button aria-label="Collapse"></button>Section surfaces</h3>
        <div class="row r1"><span></span><span class="val"><button class="act">Surface</button></span></div>
      </div>
      <div class="scroll"><i></i></div>
    </div>
    <div class="desc"><b>Filled</b><p>Fill cut geometries</p></div>
  </aside>

  <nav class="rail">
    <button><svg width="16" height="16"><use href="#gear"/></svg><span>Settings</span></button>
    <button class="bom"><svg width="16" height="14"><path d="M.5.5h15v13H.5z" fill="#fff" stroke="#999"/><path d="M0 0h16v4H0z" fill="#e8703c"/><path d="M1 7.500h14M1 10.500h14M4.500 4v10M8.500 4v10M12.500 4v10" stroke="#999"/></svg><span>Bill of material</span></button>
  </nav>
</main>

<footer class="status"><span class="a">Width: 1113, Height: 725, X: 674, Y: 612</span><span class="b"></span><span class="c">0/1 Selected geometries</span><span class="d">3DVS 17 (2026.3.3)</span></footer>
</body>
</html>
```
FILE: styles.css
```css
* { box-sizing: border-box; margin: 0; padding: 0; }
:root { --accent: #dc7e2b; --line: #a0a0a0; --face: #f0f0f0; }
body { display: flex; flex-direction: column; height: 100vh; overflow: hidden; background: #fff; color: #000; font: 11px/15px "Noto Sans", "Open Sans", sans-serif; }
button, input, select { font: inherit; color: inherit; border: 0; background: none; border-radius: 0; min-width: 0; }
svg { display: block; flex: none; }
h1, h2, h3 { font-size: 11px; }
.defs { position: absolute; }

/* title bar */
.titlebar { display: grid; grid-template-columns: 120px 1fr 147px; align-items: center; height: 24px; padding-bottom: 2px; flex: none; }
.titlebar h1 { text-align: center; font-family: "Open Sans", sans-serif; font-weight: 600; white-space: nowrap; }
.quick { display: flex; align-items: center; padding-left: 3px; gap: 7px; }
.quick button:nth-of-type(1) { margin-left: 2px; }
.quick button:nth-of-type(3) { margin-left: 12px; }
.winctl { display: flex; justify-content: flex-end; }
.winctl button { display: grid; place-items: center; width: 46px; height: 22px; }

/* menu */
.menu { display: flex; height: 23px; flex: none; background: var(--accent); }
.menu a { display: flex; align-items: center; padding: 0 14px; color: #fff; text-decoration: none; }
.menu a.on { background: #fff; color: #000; }
.file { display: grid; place-items: center; width: 45px; }
.help { display: flex; align-items: center; gap: 8px; margin-left: auto; }
.help input { width: 176px; height: 16px; padding-left: 2px; background: var(--face); }
.help button { display: flex; align-items: center; gap: 4px; }

/* ribbon */
.ribbon { display: flex; height: 91px; flex: none; padding: 2px 0 6px; }
.group { display: flex; flex-direction: column; justify-content: space-between; border-right: 1px solid #e2e2e2; flex: none; }
.group h2 { font-weight: 400; text-align: center; white-space: nowrap; }
.g-snap { width: 75px; } .g-circlemode { width: 79px; } .g-section { width: 51px; } .g-coord { width: 71px; }
.g-length { width: 177px; } .g-circle { width: 96px; } .g-distance { width: 106px; } .g-angle { width: 53px; }
.g-surface { width: 167px; } .g-box { width: 98px; } .g-wall { width: 96px; } .g-drill { width: 56px; }
.stack { display: flex; flex-direction: column; align-items: flex-start; padding-left: 6px; }
.g-snap .stack { padding-left: 9px; }
.small { display: flex; align-items: center; gap: 2px; height: 22px; padding: 0 3px 0 1px; border: 1px solid transparent; color: #705b2c; }
.small.on { background: #cfe4f4; border-color: var(--accent); }
.tools { display: flex; justify-content: center; gap: 3px; }
.tool { display: flex; flex-direction: column; align-items: center; padding: 3px 1px 0; color: #705b2c; line-height: 13px; }
.tool svg { height: 35px; }
.tool span { white-space: nowrap; margin-top: 1px; }
.g-circle .tools, .g-distance .tools, .g-box .tools { gap: 4px; padding-left: 2px; }
.g-section .tools, .g-length .tools { padding-left: 4px; }
.g-wall .tools { gap: 6px; }
.tool.normal { width: 42px; height: 67px; padding-top: 2px; border: 1px solid var(--accent); background: linear-gradient(#cfe4f4 38px, #0078d7 38px, #0078d7 39px, #fff 39px); }
.drop { width: 0; height: 0; margin-top: 5px; border: 3px solid transparent; border-top: 4px solid #000; border-bottom: 0; }
.drop.in { display: inline-block; margin: 0 0 2px 2px; }

/* docked panels */
.work { display: flex; flex: 1; min-height: 0; }
.left { display: flex; flex-direction: column; gap: 4px; width: 386px; flex: none; padding-bottom: 2px; }
.dock { display: flex; flex-direction: column; }
.grow { flex: 1; min-height: 0; }
.cap { display: flex; align-items: center; gap: 8px; height: 18px; flex: none; padding: 0 5px 0 4px; background: var(--accent); color: #fff; }
.cap h2 { flex: 1; font-weight: 400; }
.x { display: grid; place-items: center; width: 12px; height: 12px; background: #c75050; }
.pane { display: flex; flex-direction: column; margin-top: 2px; padding: 0 2px; border: 1px solid var(--line); }
.bar { display: flex; align-items: center; gap: 9px; height: 27px; padding: 2px 6px 0; flex: none; }
.f { fill: #edf4fa; stroke: #8fa9c2; }
.d { fill: #003c74; }
.s { fill: none; stroke: #003c74; }
.gray .f { fill: #fff; stroke: #b5b5b5; }
.gray .s { stroke: #999; }
.gallery { border: 1px solid #696969; height: 366px; padding: 0 5px; }
.ghead { display: flex; align-items: center; gap: 5px; height: 22px; padding: 0 4px 4px 7px; color: #00399b; }
.ghead hr { flex: 1; border: 0; border-top: 1px solid #d5dbf0; margin-right: 4px; }
.thumbs { display: grid; grid-template-columns: 160px 160px; gap: 0 10px; }
figure { height: 112px; text-align: center; margin-top: 1px; }
figure svg { width: 160px; height: 90px; border: 1px solid #000; }
figcaption { display: inline-block; margin-top: 2px; padding: 0 2px; line-height: 17px; }
.sel figcaption { background: var(--face); }
.ptabs { display: flex; height: 23px; padding: 0 0 0 5px; flex: none; }
.ptabs button { display: flex; align-items: center; gap: 2px; height: 22px; padding: 0 5px 2px 2px; white-space: nowrap; }
.ptabs .on { background: var(--accent); color: #fff; border: 1px solid var(--line); border-top: 0; padding-left: 3px; }
.ptabs .bl, .ptabs .br { position: relative; padding: 0 7px 2px 5px; }
.bl::before, .br::after { content: ""; position: absolute; top: 4px; height: 14px; border-left: 1px solid #888; }
.bl::before { left: 0; } .br::after { right: 0; }
.ptabs.low { padding-left: 2px; }
.props { flex: 1; min-height: 0; padding: 0 3px 0 1px; }
.props .bar { height: 26px; padding-left: 7px; }

/* property sheets */
.sheet { display: flex; flex: 1; min-height: 0; overflow: hidden; background: var(--face); }
.rows { flex: 1; min-width: 0; }
.scroll { width: 17px; border-left: 1px solid #fafafa; }
.scroll i { display: block; width: 2px; margin-left: 8px; background: #858585; }
.cat { display: flex; align-items: center; height: 19px; font-weight: 700; }
.cat button { width: 9px; height: 9px; margin: 0 10px 0 5px; border: 1px solid #808080; border-radius: 1px; background: linear-gradient(#3a50b8, #3a50b8) center / 5px 1px no-repeat #fff; }
.c1 { padding-left: 19px; } .c2 { padding-left: 38px; }
.row { display: flex; height: 19px; padding-left: 19px; }
.row.r1 { padding-left: 38px; }
.row > :first-child { flex: 1; min-width: 0; padding-left: 4px; line-height: 17px; background: #fff; white-space: nowrap; overflow: hidden; border-bottom: 1px solid var(--face); border-right: 1px solid var(--face); }
.val { display: flex; align-items: center; flex: none; width: 173px; background: #fff; border-bottom: 1px solid var(--face); padding-left: 4px; }
.lsheet .val { width: 172px; }
.val input[type=text] { flex: 1; height: 17px; }
.val select { flex: 1; height: 17px; appearance: none; background: url("data:image/svg+xml,%3Csvg xmlns='http://www.w3.org/2000/svg' width='16' height='18'%3E%3Crect x='.5' y='.5' width='15' height='17' fill='%23fff' stroke='%23bbb'/%3E%3Cpath d='M4 8l4 4 4-4' fill='none' stroke='%23444'/%3E%3C/svg%3E") right center no-repeat; }
input[type=checkbox] { appearance: none; display: grid; place-items: center; width: 13px; height: 13px; border: 1px solid #666; border-radius: 3px; background: #f6f6f6; }
input[type=checkbox]:checked { background: #005fb8; border-color: #005fb8; }
input[type=checkbox]:checked::before { content: ""; width: 7px; height: 4px; margin-bottom: 2px; border: solid #fff; border-width: 0 0 1px 1px; transform: rotate(-45deg); }
.hot > :first-child { background: #0078d7; color: #fff; }
.sw { width: 16px; height: 16px; margin: 0 7px 0 -2px; border: 1px solid #000; }
.yellow { background: #ff0; } .black { background: #000; }
.act { flex: 1; height: 18px; margin-left: -3px; line-height: 15px; background: #e5f2fd; border: 1px solid #c7e2f7; border-radius: 2px; }
.spin { display: flex; flex-direction: column; width: 18px; }
.spin button { display: grid; place-items: center; height: 9px; border: 1px solid #ccc; border-top: 0; }
.spin button::before { content: ""; border: 3px solid transparent; border-top: 0; border-bottom: 3px solid #222; }
.spin button + button::before { border-top: 3px solid #222; border-bottom: 0; }
.lsheet .scroll i { height: 18px; margin-top: 17px; }
.rsheet .scroll i { height: 581px; margin-top: 18px; }
.rsheet { margin-top: 1px; }
.desc { flex: none; height: 60px; margin: 5px 1px 2px; padding: 3px; background: var(--face); border: 1px solid var(--line); }
.desc b { display: block; line-height: 16px; margin-bottom: 1px; }

/* document and output */
.center { display: flex; flex-direction: column; flex: 1; min-width: 0; margin-left: 4px; }
.doc { display: flex; flex-direction: column; flex: 1; min-height: 0; border: 1px solid var(--line); padding-bottom: 4px; }
.dtabs { display: flex; justify-content: space-between; height: 20px; border-bottom: 1px solid var(--line); padding: 2px 3px 0 5px; flex: none; }
.dtab { display: flex; align-items: center; justify-content: space-between; width: 195px; padding: 0 3px 2px 29px; background: var(--accent); color: #fff; clip-path: polygon(16px 0, 100% 0, 100% 100%, 0 100%); }
.dtab b { font-family: "Open Sans", sans-serif; font-weight: 600; white-space: nowrap; }
.dmenu { display: grid; place-items: center; width: 15px; height: 15px; background: #b0b0b0; }
.view { position: relative; flex: 1; min-height: 0; margin: 1px 3px 0 2px; border: 1px solid #696969; border-width: 2px 0 0 1px; overflow: hidden; }
.scene { position: absolute; inset: 0; }
.axes { font: 22px "Lato", sans-serif; font-weight: 300; }
.callout { position: absolute; left: 480px; top: 214px; width: 379px; height: 88px; padding: 3px 5px; border: 1px solid #c80000; outline: 1px solid #e06060; outline-offset: -2px; background: #fff; font: 18px/20px "Liberation Sans", Arial, sans-serif; white-space: nowrap; }
.callout svg { display: inline-block; margin-right: 2px; }
.callout .width { vertical-align: -5px; margin-left: 2px; }
.output { display: flex; flex-direction: column; margin-top: 4px; }
.log { display: grid; grid-template-columns: 1fr 17px; grid-template-rows: 57px 16px; margin-top: 2px; padding: 1px 2px; border: 1px solid var(--line); font: 12px/15px "Liberation Sans", Arial, sans-serif; }
.lines { padding: 3px; min-width: 0; overflow: hidden; white-space: nowrap; }
.vs, .hs { display: flex; justify-content: space-between; align-items: center; background: var(--face); }
.vs { flex-direction: column; padding: 6px 0; }
.hs { grid-column: 1 / 3; padding: 0 21px 0 5px; }
.otabs { display: flex; height: 22px; padding: 0 7px 4px 1px; }
.arrow { display: grid; place-items: center; width: 15px; background: #f7f7f7; }
.end { margin-left: auto; }
.prog { width: 81px; margin-left: 5px; padding-left: 17px; background: var(--accent); color: #fff; clip-path: polygon(0 0, 100% 0, 100% 100%, 19px 100%); }
.ot { padding: 0 11px 0 15px; border: 1px solid var(--line); border-top: 0; border-left-color: #ccc; border-radius: 0 0 3px 9px; }

/* section panel */
.right { display: flex; flex-direction: column; width: 380px; flex: none; margin: 0 2px 0 4px; padding-bottom: 1px; }

.rail { width: 18px; flex: none; padding-top: 4px; overflow: hidden; }
.rail button { display: flex; flex-direction: column; align-items: center; gap: 9px; width: 20px; height: 92px; padding-top: 3px; background: #f3f3f3; border: 1px solid var(--line); color: #6d6d6d; }
.rail span { writing-mode: vertical-rl; white-space: nowrap; line-height: 16px; }
.rail .bom { height: 125px; margin-top: 14px; }

.status { display: flex; height: 14px; flex: none; padding-left: 695px; color: #777; line-height: 17px; white-space: nowrap; }
.status span { border-left: 1px solid #ccc; padding-left: 4px; }
.status .a { flex: 0 0 307px; } .status .b { flex: 305; } .status .c { flex: 306; } .status .d { flex: 304; }
```
